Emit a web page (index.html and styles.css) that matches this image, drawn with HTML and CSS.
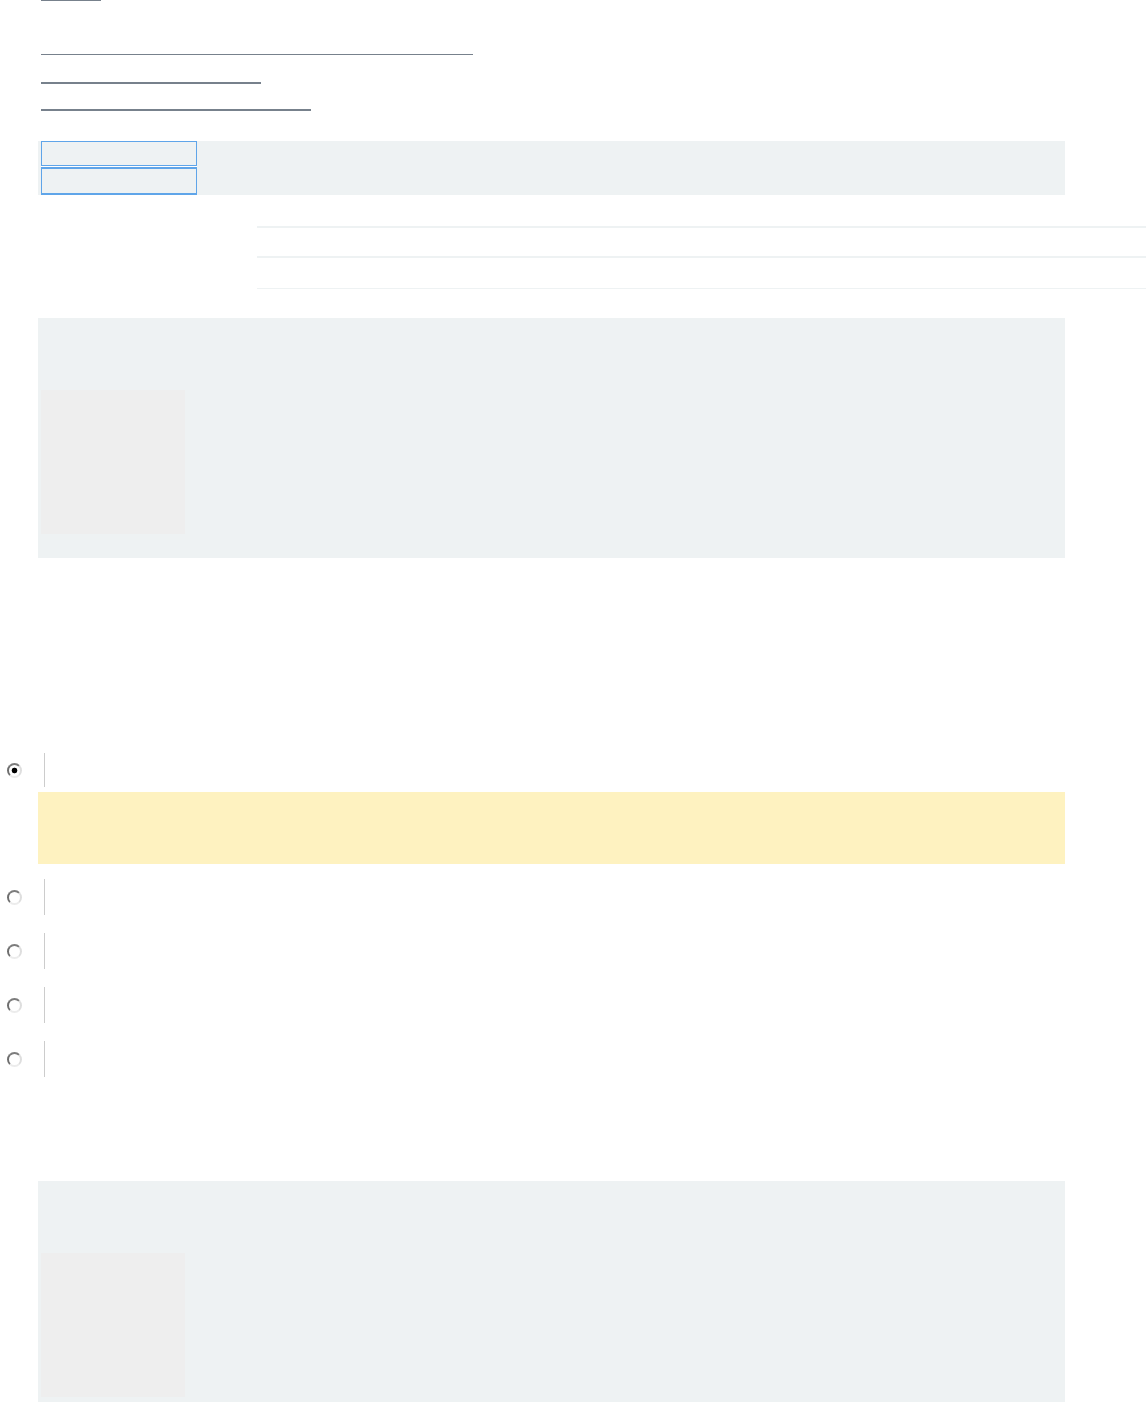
FILE: index.html
```html
<!DOCTYPE html>
<html lang="en">
<head>
    <meta charset="UTF-8">
    <meta name="viewport" content="width=device-width, initial-scale=1.0">
    <title>Page</title>
    <link rel="stylesheet" href="styles.css">
</head>
<body>
    <nav class="links">
        <a class="link link-short" href="#"></a>
        <a class="link link-long" href="#"></a>
        <a class="link link-mid" href="#"></a>
        <a class="link link-wide" href="#"></a>
    </nav>

    <div class="tab-bar">
        <div class="tab"></div>
        <div class="tab tab-second"></div>
    </div>

    <div class="rules">
        <div class="rule-row"></div>
        <div class="rule-row rule-row-tall"></div>
        <div class="rule-end"></div>
    </div>

    <section class="panel">
        <div class="thumb"></div>
    </section>

    <form class="options">
        <label class="option">
            <input class="radio" type="radio" name="choice" checked>
            <span class="option-label"></span>
        </label>
        <div class="notice"></div>
        <div class="option-list">
            <label class="option">
                <input class="radio" type="radio" name="choice">
                <span class="option-label"></span>
            </label>
            <label class="option">
                <input class="radio" type="radio" name="choice">
                <span class="option-label"></span>
            </label>
            <label class="option">
                <input class="radio" type="radio" name="choice">
                <span class="option-label"></span>
            </label>
            <label class="option">
                <input class="radio" type="radio" name="choice">
                <span class="option-label"></span>
            </label>
        </div>
    </form>

    <section class="panel panel-last">
        <div class="thumb"></div>
    </section>
</body>
</html>
```

FILE: styles.css
```css
body {
    margin: 0;
    font-family: 'Liberation Sans', Arial, sans-serif;
    background-color: #fff;
    color: transparent;
    overflow-x: hidden;
}

/* Links oben */
.links {
    display: flex;
    flex-direction: column;
    align-items: flex-start;
    padding-left: 41px;
}

.link {
    display: block;
    height: 0;
    border-bottom: 1px solid #77818c;
}

.link-short { width: 60px; }
.link-long { width: 432px; margin-top: 53px; }
.link-mid { width: 220px; margin-top: 27px; border-bottom-width: 2px; }
.link-wide { width: 270px; margin-top: 25px; border-bottom-width: 2px; }

/* Tabs */
.tab-bar {
    width: 1027px;
    height: 54px;
    margin: 30px 0 0 38px;
    padding-left: 3px;
    box-sizing: border-box;
    background-color: #eef2f3;
}

.tab {
    width: 156px;
    height: 25px;
    box-sizing: border-box;
    border: 1px solid #5fa5e9;
}

.tab-second {
    height: 28px;
    margin-top: 1px;
    border-width: 2px 1px;
    box-shadow: 0 -1px 0 #fff;
}

/* Trennlinien */
.rules {
    margin: 31px 0 0 257px;
}

.rule-row {
    height: 28px;
    border-top: 2px solid #eef2f3;
}

.rule-row-tall {
    height: 30px;
}

.rule-end {
    border-top: 1px solid #eef2f3;
}

/* Panels */
.panel {
    width: 1027px;
    margin: 29px 0 0 38px;
    padding: 72px 0 24px 3px;
    box-sizing: border-box;
    background-color: #eef2f3;
}

.panel-last {
    margin-top: 104px;
}

.thumb {
    width: 144px;
    height: 144px;
    background-color: #eeeeee;
}

/* Auswahl */
.options {
    margin: 195px 0 0;
}

.option {
    display: flex;
    align-items: center;
    height: 34px;
}

.radio {
    appearance: none;
    -webkit-appearance: none;
    box-sizing: border-box;
    width: 15px;
    height: 15px;
    margin: 0 0 0 7px;
    border-radius: 50%;
    border: 2px solid;
    border-color: #7c7c7c #dedede #ececec #6e6e6e;
    background: #fff;
}

.radio:checked {
    background: radial-gradient(circle, #000 0, #000 2.5px, #fff 3.2px);
}

.option-label {
    align-self: stretch;
    margin-left: 22px;
    border-left: 1px solid #cccccc;
}

.notice {
    width: 1027px;
    height: 72px;
    margin: 5px 0 0 38px;
    background-color: #fef2c0;
}

.option-list {
    display: flex;
    flex-direction: column;
    gap: 18px;
    margin-top: 15px;
}

.option-list .option {
    height: 36px;
}
```
